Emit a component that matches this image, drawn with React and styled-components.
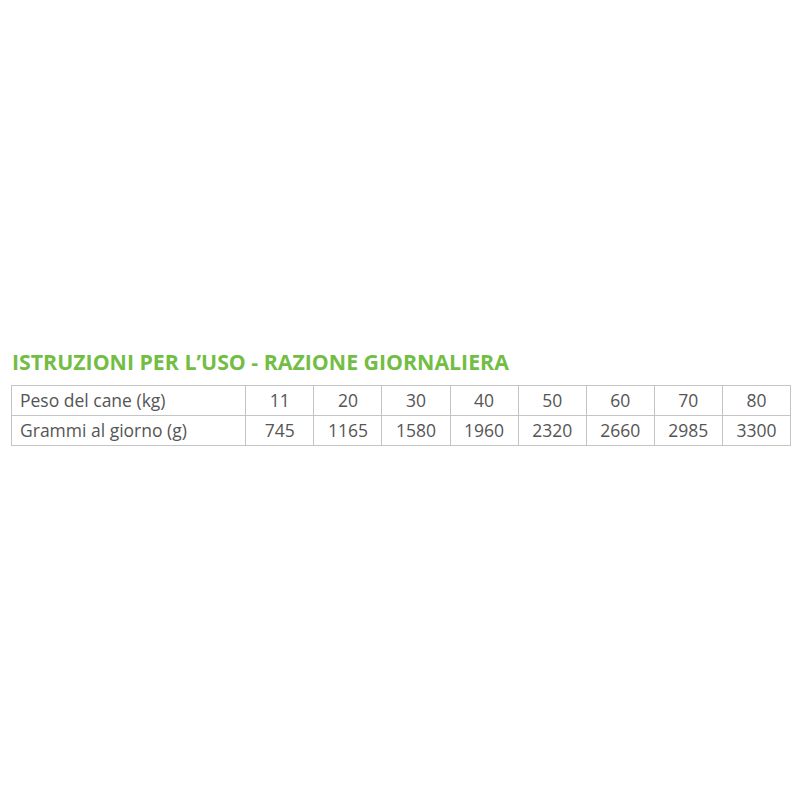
import React from "react";
import styled, { createGlobalStyle } from "styled-components";

const Global = createGlobalStyle`
  html, body {
    margin: 0;
    padding: 0;
    background: #fff;
  }
`;

const Page = styled.div`
  width: 800px;
  height: 800px;
  display: flex;
  flex-direction: column;
  justify-content: center;
  padding: 0 9px 6px 11px;
  box-sizing: border-box;
`;

const Title = styled.h2`
  margin: 0 0 10px 1px;
  font-family: "Open Sans", sans-serif;
  font-weight: 700;
  font-size: 21.3px;
  line-height: 26px;
  color: #72be44;
`;

const Table = styled.table`
  width: 780px;
  table-layout: fixed;
  border-collapse: collapse;
  font-family: "Open Sans", sans-serif;
  font-size: 17.5px;
  color: #555;
`;

const Col = styled.col`
  width: ${(p) => p.$w}px;
`;

const Cell = styled.td`
  border: 1px solid #c4c4c4;
  height: 29px;
  padding: 0 8px;
  text-align: ${(p) => (p.$label ? "left" : "center")};
  white-space: nowrap;
`;

const weights = [11, 20, 30, 40, 50, 60, 70, 80];
const grams = [745, 1165, 1580, 1960, 2320, 2660, 2985, 3300];

export default function App() {
  return (
    <Page>
      <Global />
      <Title>ISTRUZIONI PER L’USO - RAZIONE GIORNALIERA</Title>
      <Table>
        <colgroup>
          <Col $w={234} />
          {weights.map((w) => (
            <Col key={w} $w={68} />
          ))}
        </colgroup>
        <tbody>
          <tr>
            <Cell $label>Peso del cane (kg)</Cell>
            {weights.map((w) => (
              <Cell key={w}>{w}</Cell>
            ))}
          </tr>
          <tr>
            <Cell $label>Grammi al giorno (g)</Cell>
            {grams.map((g) => (
              <Cell key={g}>{g}</Cell>
            ))}
          </tr>
        </tbody>
      </Table>
    </Page>
  );
}
